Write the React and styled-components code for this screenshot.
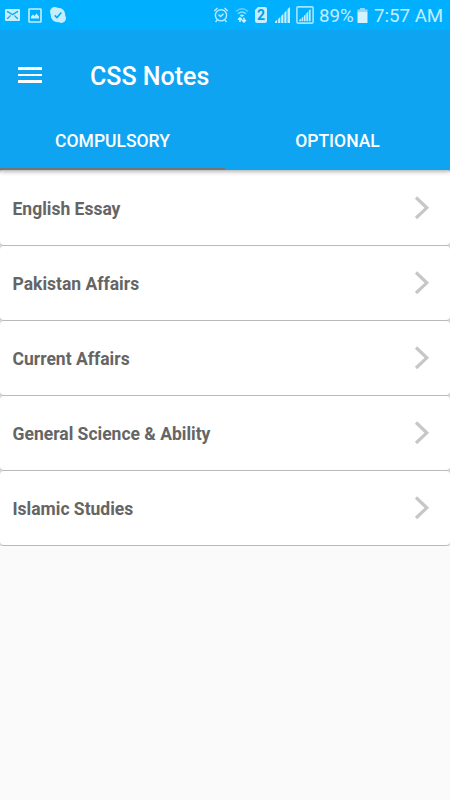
import React, { useState } from "react"
import styled, { createGlobalStyle } from "styled-components";

const subjects = {
  Compulsory: [
    "English Essay",
    "Pakistan Affairs",
    "Current Affairs",
    "General Science & Ability",
    "Islamic Studies",
  ],
  Optional: [],
};

const MailIcon = () => (
  <StatusIcon width="15" height="12" viewBox="0 0 15 12">
    <rect width="15" height="12" rx="1" fill="#c4eeff" />
    <path d="M2 2.5C5 3 5.5 5.5 7.5 5.5S10 3 13 2.5M2 9.5C4 9 4.5 7 5.5 6.5M13 9.5C11 9 10.5 7 9.5 6.5" fill="none" stroke="#0aa6ee" strokeWidth="1.3" />
  </StatusIcon>
)

const PictureIcon = () => (
  <StatusIcon width="14" height="15" viewBox="0 0 14 15">
    <rect x="1" y="1" width="12" height="13" rx="0.5" fill="none" stroke="#c4eeff" strokeWidth="1.6" />
    <path d="M3 10.5V8.5L5 6.5L6.5 8L8.5 5.5L11 8.5V10.5Z" fill="#c4eeff" />
  </StatusIcon>
)

const SkypeIcon = () => (
  <StatusIcon width="16" height="16" viewBox="0 0 16 16">
    <circle cx="8" cy="8" r="7.3" fill="#c4eeff" />
    <circle cx="4.7" cy="4.7" r="4.7" fill="#c4eeff" />
    <circle cx="11.3" cy="11.3" r="4.7" fill="#c4eeff" />
    <path d="M4.7 8.3L7 10.5L11.3 5.5" fill="none" stroke="#0aa6ee" strokeWidth="1.6" />
  </StatusIcon>
)

const AlarmIcon = () => (
  <StatusIcon width="16" height="16" viewBox="0 0 15 16" fill="none" stroke="#b8eaff" strokeWidth="1.4">
    <circle cx="7.5" cy="8.3" r="5.6" />
    <path d="M0.8 4L4 1M14.2 4L11 1M3.7 12.9L2 15M11.3 12.9L13 15M5 7.6L7 9.5L10 6.9" />
  </StatusIcon>
)

const WifiIcon = () => (
  <StatusIcon width="14" height="16" viewBox="0 0 14 16" fill="none">
    <path d="M1 4.5Q7 -0.8 13 4.5" stroke="#63cfff" strokeWidth="1.4" />
    <path d="M3 6.8Q7 3.3 11 6.8" stroke="#8adbff" strokeWidth="1.4" />
    <path d="M4.8 8.4Q7 6.4 9.2 8.4L7 10Z" fill="#c4eeff" />
    <path d="M5 15V10.8M3 12.8L5 10.8L7 12.8M9 10.8V15M7 13L9 15L11 13" stroke="#d4f3ff" strokeWidth="1.5" />
  </StatusIcon>
)

const SignalBars = () => (
  <path d="M0 16V14.5L2.2 12.8V16ZM3.1 16V12L5.3 10V16ZM6.2 16V9L8.4 6.8V16ZM9.3 16V5.8L11.5 3.6V16ZM12.5 16V2.2L15 0V16Z" fill="#c4eeff" />
)

const SignalIcon = () => (
  <StatusIcon width="15" height="16" viewBox="0 0 15 16">
    <SignalBars />
  </StatusIcon>
)

const BoxedSignalIcon = () => (
  <StatusIcon width="18" height="18" viewBox="0 0 18 18">
    <rect x="0.9" y="0.9" width="16.2" height="16.2" rx="1" fill="none" stroke="#a5e4ff" strokeWidth="1.6" />
    <g transform="translate(3.2 3.1) scale(.76)">
      <SignalBars />
    </g>
  </StatusIcon>
)

const BatteryIcon = () => (
  <StatusIcon width="11" height="15" viewBox="0 0 11 15">
    <path d="M3 0H8V1.5H10.5V3.5H0.5V1.5H3Z" fill="#8adbff" />
    <path d="M0.5 3.5H10.5V15H0.5Z" fill="#d4f3ff" />
  </StatusIcon>
)

const App = () => {
  const [active, setActive] = useState("Compulsory");

  return (
    <Screen>
      <GlobalStyle />
      <StatusBar>
        <Notifications>
          <MailIcon />
          <PictureIcon />
          <SkypeIcon />
        </Notifications>
        <SystemIcons>
          <AlarmIcon />
          <WifiIcon />
          <SimCard>2</SimCard>
          <SignalIcon />
          <BoxedSignalIcon />
          <Battery>
            <StatusText $width={35}>89%</StatusText>
            <BatteryIcon />
          </Battery>
          <StatusText $width={69}>7:57 AM</StatusText>
        </SystemIcons>
      </StatusBar>
      <Header>
        <Toolbar>
          <MenuButton aria-label="Menu">
            <span />
            <span />
            <span />
          </MenuButton>
          <Title>CSS Notes</Title>
        </Toolbar>
        <Tabs>
          {Object.keys(subjects).map((name) => (
            <Tab key={name} $active={name === active} onClick={() => setActive(name)}>
              {name}
            </Tab>
          ))}
        </Tabs>
      </Header>
      <List>
        {subjects[active].map((subject) => (
          <Row key={subject}>
            <Card>
              <Label>{subject}</Label>
              <svg width="16" height="24" viewBox="0 0 16 24" fill="none" stroke="#c7c7c7" strokeWidth="3.2">
                <path d="M2 1.5L12.8 11.8L2 22" />
              </svg>
            </Card>
          </Row>
        ))}
      </List>
    </Screen>
  )
}

export default App

const GlobalStyle = createGlobalStyle`
  * {
    box-sizing: border-box;
  }
  body {
    margin: 0;
    background: #fafafa;
    font-family: Roboto, sans-serif;
  }
`;

const Screen = styled.div`
  height: 800px;
  overflow: hidden;
  background: #fafafa;
`;

const StatusBar = styled.div`
  height: 30px;
  padding: 0 7px 0 5px;
  display: flex;
  align-items: center;
  justify-content: space-between;
  background: #00b0ff;
`;

const StatusIcon = styled.svg`
  display: block;
  flex: none;
`;

const Notifications = styled.div`
  display: flex;
  align-items: center;
  gap: 8px;
`;

const SystemIcons = styled.div`
  display: flex;
  align-items: center;
  gap: 6px;
`;

const SimCard = styled.span`
  width: 12px;
  height: 16px;
  border-radius: 2px;
  margin-right: 2px;
  clip-path: polygon(3px 0, 100% 0, 100% 100%, 0 100%, 0 3px);
  background: #c4eeff;
  color: #009fe8;
  font-size: 14px;
  font-weight: 700;
  line-height: 17px;
  text-align: center;
`;

const Battery = styled.div`
  margin-left: -1px;
  display: flex;
  align-items: center;
  gap: 3px;
`;

const StatusText = styled.span`
  width: ${({ $width }) => $width}px;
  padding-top: 1px;
  color: #c4eeff;
  font-size: 18.7px;
  line-height: 30px;
  white-space: nowrap;
`;

const Header = styled.header`
  position: relative;
  background: #0fa4f2;
  box-shadow: 0 1px 5px rgba(0, 0, 0, 0.4);
  clip-path: inset(0 0 -10px 0);
`;

const Toolbar = styled.div`
  height: 90px;
  padding-left: 18px;
  display: flex;
  align-items: center;
`;

const MenuButton = styled.button`
  width: 24px;
  height: 16px;
  margin: 0 48px 0 0;
  padding: 0;
  border: none;
  background: none;
  display: flex;
  flex-direction: column;
  justify-content: space-between;
  span {
    height: 2.6px;
    background: #fff;
  }
`;

const Title = styled.h1`
  margin: 3px 0 0;
  color: #fff;
  font-size: 25px;
  font-weight: 500;
  line-height: 30px;
`;

const Tabs = styled.nav`
  display: grid;
  grid-template-columns: 1fr 1fr;
  height: 50px;
`;

const Tab = styled.button`
  padding: 0;
  border: none;
  border-bottom: 2px solid ${({ $active }) => ($active ? "#757575" : "#0fa4f2")};
  margin-top: -6px;
  background: none;
  color: #fff;
  font-family: inherit;
  font-size: 17.5px;
  font-weight: 500;
  text-transform: uppercase;
`;

const List = styled.ul`
  margin: 0;
  padding: 0;
  list-style: none;
`;

const Row = styled.li`
  height: 75px;
  background: #d8d8d8;
  &:first-child {
    height: 76px;
  }
  &:last-child {
    background: linear-gradient(#d8d8d8 50%, #e4e4e4 50%);
  }
`;

const Card = styled.div`
  height: 100%;
  padding: 0 20px 0 12.5px;
  border-bottom: 1px solid #bababa;
  border-radius: 4px;
  display: flex;
  align-items: center;
  justify-content: space-between;
  background: #fff;
`;

const Label = styled.span`
  margin-top: 2px;
  color: #656565;
  font-size: 17.5px;
  font-weight: 700;
`;
